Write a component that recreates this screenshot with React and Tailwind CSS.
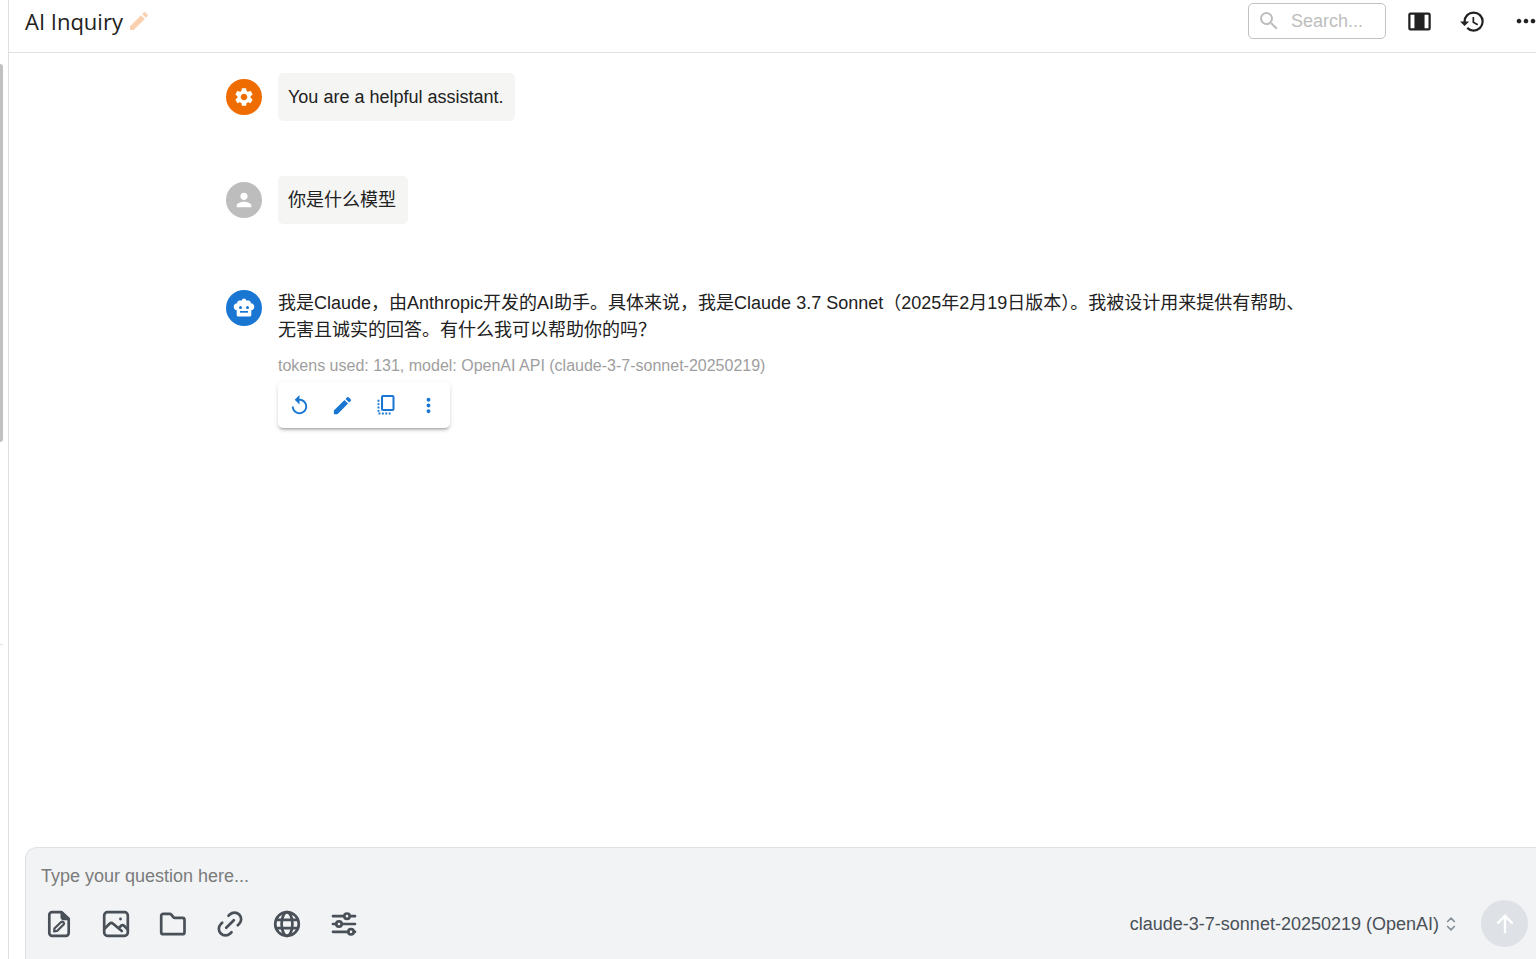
import { useState } from 'react'
import {
  MdEdit,
  MdSearch,
  MdHistory,
  MdMoreHoriz,
  MdMoreVert,
  MdSettings,
  MdPerson,
  MdReplay,
} from 'react-icons/md'
import { TbSelector, TbArrowUp } from 'react-icons/tb'

const RobotIcon = () => (
  <svg viewBox="0 0 24 24" className="size-6" fill="currentColor">
    <path d="M12 2.500c1.100 0 2 .8 2.300 1.900h2.200c1.300 0 2.300 1 2.300 2.300v.6c2.100.1 3.500 1.600 3.500 3.500s-1.300 3.300-3 3.500V19c0 .8-.7 1.500-1.500 1.500H6.200c-.8 0-1.500-.7-1.500-1.500v-4.700c-1.700-.2-3-1.600-3-3.500s1.400-3.400 3.500-3.500v-.6c0-1.300 1-2.300 2.300-2.300h2.200c.3-1.100 1.200-1.900 2.300-1.900Z" />
    <circle cx="8.500" cy="11.500" r="1.500" fill="#1976d2" />
    <circle cx="15.500" cy="11.500" r="1.500" fill="#1976d2" />
    <path d="M8 15h8v1.700H8z" fill="#1976d2" />
  </svg>
)

const ColumnsIcon = () => (
  <svg viewBox="0 0 24 24" className="size-[27px]" fill="currentColor">
    <path fillRule="evenodd" d="M4 4h16a2 2 0 0 1 2 2v12a2 2 0 0 1-2 2H4a2 2 0 0 1-2-2V6a2 2 0 0 1 2-2Zm0 2v12h3.500V6H4Zm12.500 0v12H20V6h-3.500Z" />
  </svg>
)

const CopyIcon = () => (
  <svg viewBox="0 0 22 22" className="size-[22px]" fill="none" stroke="currentColor">
    <rect x="7" y="2" width="11.500" height="14" rx="1" strokeWidth="2" />
    <path d="M3.500 5.800v12M3.500 19.500h12" strokeWidth="1.900" strokeDasharray="1.900 1.500" />
  </svg>
)

// Shared frame for the toolbar glyphs, drawn on a 28px grid
const ToolIcon = ({ children }) => (
  <svg viewBox="0 0 28 28" className="size-7" fill="none" stroke="currentColor" strokeWidth="2.700" strokeLinecap="round" strokeLinejoin="round">
    {children}
  </svg>
)

const FilePenIcon = () => (
  <ToolIcon>
    <path d="M16.500 2.200H7A2.700 2.700 0 0 0 4.300 4.900v18.200A2.700 2.700 0 0 0 7 25.800h14a2.700 2.700 0 0 0 2.700-2.700V9l-7.200-6.800Z" />
    <path d="M16.800 2.500v4.300a2 2 0 0 0 2 2h4.700Z" fill="currentColor" />
    <path d="M9.200 21.500l.2-3 6.500-6.300a1.700 1.700 0 0 1 2.500 2.500l-6.300 6.300-2.900.5Z" strokeWidth="2.200" />
  </ToolIcon>
)

const ImageIcon = () => (
  <ToolIcon>
    <rect x="2.200" y="2.200" width="23.600" height="23.600" rx="3.200" />
    <path d="M2.500 18.800l5-5c1.200-1.300 2.400-1.300 3.600 0l8.700 7.200M16.800 18l2-2c1.100-1.100 2.400-1.100 3.500 0l3.200 3.400" />
    <circle cx="18.500" cy="9" r="1.400" fill="currentColor" stroke="none" />
  </ToolIcon>
)

const FolderIcon = () => (
  <ToolIcon>
    <path d="M4.200 3.800h6.300c.8 0 1.300.3 1.800.9l2 2.500c.4.500.9.700 1.500.7h7.700a2 2 0 0 1 2 2v12.300a2 2 0 0 1-2 2H4.200a2 2 0 0 1-2-2V5.800a2 2 0 0 1 2-2Z" />
  </ToolIcon>
)

const LinkIcon = () => (
  <ToolIcon>
    <path d="M10.200 17.800L17.800 10.200M12.500 5.800l1.300-1.300a6.500 6.500 0 0 1 9.400 9.400l-1.400 1.400M15.500 22.200l-1.300 1.300a6.500 6.500 0 0 1-9.400-9.400l1.400-1.400" />
  </ToolIcon>
)

const GlobeIcon = () => (
  <ToolIcon>
    <circle cx="14" cy="14" r="11.800" />
    <ellipse cx="14" cy="14" rx="5.400" ry="11.800" />
    <path d="M3.600 9.800h20.800M3.600 18.200h20.800" />
  </ToolIcon>
)

const SlidersIcon = () => (
  <ToolIcon>
    <path d="M3 6.200h11M20 6.200h5M3 14h3M12 14h13M3 21.800h15M24 21.800h1" />
    <circle cx="17" cy="6.200" r="2.700" />
    <circle cx="9" cy="14" r="2.700" />
    <circle cx="21" cy="21.800" r="2.700" />
  </ToolIcon>
)

const tools = [
  { label: 'Attach document', icon: <FilePenIcon /> },
  { label: 'Attach image', icon: <ImageIcon /> },
  { label: 'Open folder', icon: <FolderIcon /> },
  { label: 'Attach link', icon: <LinkIcon /> },
  { label: 'Web browsing', icon: <GlobeIcon /> },
  { label: 'Settings', icon: <SlidersIcon /> },
]

const actions = [
  { label: 'Regenerate', icon: <MdReplay /> },
  { label: 'Edit', icon: <MdEdit /> },
  { label: 'Copy', icon: <CopyIcon /> },
  { label: 'More', icon: <MdMoreVert /> },
]

function Header() {
  return (
    <header className="flex h-[53px] shrink-0 items-start justify-between border-b border-[#e0e0e0] pl-4">
      <div className="flex h-[42px] items-center gap-1">
        <h1 className="font-['Open_Sans',sans-serif] text-[22px]">AI Inquiry</h1>
        <button aria-label="Rename" className="text-[#fad1b0]"><MdEdit className="size-6" /></button>
      </div>
      <div className="flex h-[42px] items-center overflow-hidden">
        <label className="flex h-9 w-[138px] items-center gap-2.5 rounded-[5px] border border-[#c2c2c2] pl-2 text-[#bdbdbd]">
          <MdSearch className="size-6 shrink-0" />
          <input aria-label="Search" placeholder="Search..." className="w-full min-w-0 outline-none placeholder:text-[#bdbdbd]" />
        </label>
        <button aria-label="Toggle width" className="ml-5"><ColumnsIcon /></button>
        <button aria-label="History" className="ml-[26px]"><MdHistory className="size-[27px]" /></button>
        <button aria-label="More options" className="-mr-1 ml-[26px]"><MdMoreHoriz className="size-7" /></button>
      </div>
    </header>
  )
}

function Message({ avatar, color, children }) {
  return (
    <div className="flex gap-4">
      <div className={`mt-1.5 flex size-9 shrink-0 items-center justify-center rounded-full text-white ${color}`}>
        {avatar}
      </div>
      <div className="min-w-0 flex-1">{children}</div>
    </div>
  )
}

const Bubble = ({ children }) => (
  <p className="w-fit rounded-[5px] bg-[#f5f5f4] py-2.5 pr-3 pl-2.5 leading-7">{children}</p>
)

function Composer() {
  const [question, setQuestion] = useState('')

  return (
    <form className="ml-4 h-28 shrink-0 overflow-hidden rounded-tl-xl border-t border-l border-[#dee2e6] bg-[#f1f3f5] pt-3.5 pl-[15px] text-[#495057]">
      <textarea
        aria-label="Question"
        rows={1}
        value={question}
        onChange={(e) => setQuestion(e.target.value)}
        placeholder="Type your question here..."
        className="block h-7 w-full resize-none leading-7 outline-none placeholder:text-[#7b7b7b]"
      />
      <div className="mt-2.5 flex items-center justify-between pr-2">
        <div className="flex gap-[21px]">
          {tools.map((tool) => (
            <button key={tool.label} type="button" aria-label={tool.label} className="flex size-9 items-center justify-center">
              {tool.icon}
            </button>
          ))}
        </div>
        <div className="flex items-center">
          <button type="button" className="flex items-center gap-0.5">
            claude-3-7-sonnet-20250219 (OpenAI)
            <TbSelector className="size-5 text-[#868e96]" />
          </button>
          <button type="submit" aria-label="Send" className="ml-5 flex size-[47px] items-center justify-center rounded-full bg-[#dee2e6] text-white">
            <TbArrowUp className="size-7" />
          </button>
        </div>
      </div>
    </form>
  )
}

function App() {
  return (
    <div className="flex h-screen overflow-hidden bg-white font-['Liberation_Sans','Noto_Sans_CJK_SC',sans-serif] text-lg text-[#212121]">
      <aside className="w-[9px] shrink-0 border-r border-[#e0e0e0] pt-16">
        <div className="h-[378px] w-[3px] rounded-r-sm bg-[#c1c1c1]" />
        <div className="mt-[202px] h-px w-[3px] bg-[#e0e0e0]" />
      </aside>
      <div className="flex min-w-0 flex-1 flex-col">
        <Header />
        <main className="flex-1 overflow-hidden pt-5">
          <div className="mx-auto flex w-[1093px] max-w-full flex-col">
            <Message color="bg-[#ef6c00]" avatar={<MdSettings className="size-[22px]" />}>
              <Bubble>You are a helpful assistant.</Bubble>
            </Message>
            <div className="mt-[55px]">
              <Message color="bg-[#bdbdbd]" avatar={<MdPerson className="size-[22px]" />}>
                <Bubble>你是什么模型</Bubble>
              </Message>
            </div>
            <div className="mt-[60px]">
              <Message color="bg-[#1976d2]" avatar={<RobotIcon />}>
                <p className="mt-1.5 leading-[27px]">
                  我是Claude，由Anthropic开发的AI助手。具体来说，我是Claude 3.7 Sonnet（2025年2月19日版本）。我被设计用来提供有帮助、无害且诚实的回答。有什么我可以帮助你的吗？
                </p>
                <p className="mt-2.5 text-base leading-6 text-[#9e9e9e]">
                  tokens used: 131, model: OpenAI API (claude-3-7-sonnet-20250219)
                </p>
                <div className="mt-1 flex w-fit rounded-[5px] bg-white text-[#1976d2] shadow-[0_3px_3px_-2px_rgba(0,0,0,0.3),0_2px_4px_rgba(0,0,0,0.16)]">
                  {actions.map((action) => (
                    <button key={action.label} aria-label={action.label} className="flex h-[46px] w-[43px] items-center justify-center text-[23px]">
                      {action.icon}
                    </button>
                  ))}
                </div>
              </Message>
            </div>
          </div>
        </main>
        <Composer />
      </div>
    </div>
  )
}

export default App
